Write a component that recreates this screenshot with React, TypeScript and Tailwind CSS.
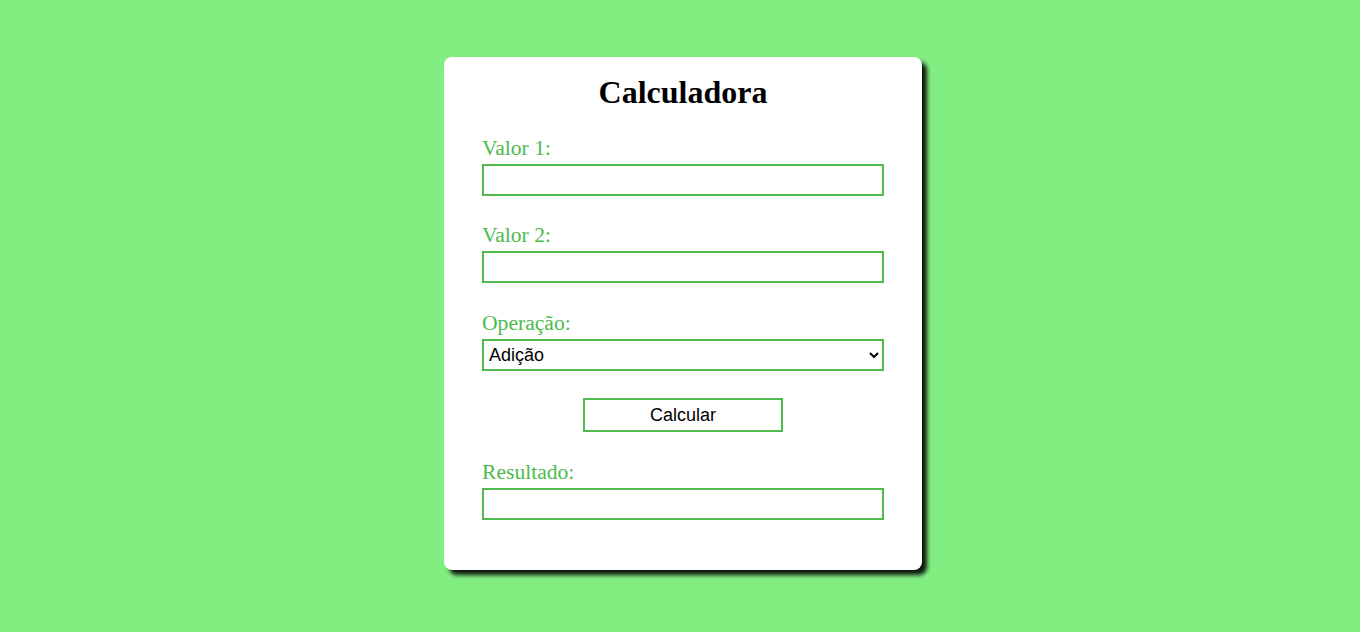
import { useState } from 'react'

const serif = { fontFamily: '"Liberation Serif", "Times New Roman", serif' }

function Field({ label, value, onChange, readOnly }: { label: string; value: string; onChange?: (v: string) => void; readOnly?: boolean }) {
  return (
    <div>
      <label className="block text-[21.6px] leading-[24px] text-[#4cbb4c] mb-[4px]" style={serif}>
        {label}
      </label>
      <input
        type="text"
        value={value}
        readOnly={readOnly}
        onChange={(e) => onChange?.(e.target.value)}
        className="block w-full h-[32px] border-2 border-[#4cbb4c] bg-white px-[3px] text-[18px] outline-none font-['Liberation_Sans',Arial,sans-serif]"
      />
    </div>
  )
}

export default function App() {
  const [a, setA] = useState('')
  const [b, setB] = useState('')
  const [op, setOp] = useState('add')
  const [result, setResult] = useState('')

  const calcular = () => {
    const x = parseFloat(a)
    const y = parseFloat(b)
    if (isNaN(x) || isNaN(y)) return setResult('')
    let r = 0
    if (op === 'add') r = x + y
    if (op === 'sub') r = x - y
    if (op === 'mul') r = x * y
    if (op === 'div') r = x / y
    setResult(String(r))
  }

  return (
    <div className="min-h-[632px] w-full bg-[#82ee82] pt-[57px] pl-[6px]">
      <div className="mx-auto w-[478px] rounded-lg bg-white px-[38px] pt-[17px] pb-[50px] shadow-[5px_5px_4px_rgba(0,0,0,0.9)]">
        <h1 className="text-center text-[32px] leading-[36px] font-bold text-black mb-[26px]" style={serif}>
          Calculadora
        </h1>

        <Field label="Valor 1:" value={a} onChange={setA} />

        <div className="mt-[27px]">
          <Field label="Valor 2:" value={b} onChange={setB} />
        </div>

        <div className="mt-[28px]">
          <label className="block text-[21.6px] leading-[24px] text-[#4cbb4c] mb-[4px]" style={serif}>
            Operação:
          </label>
          <select
            value={op}
            onChange={(e) => setOp(e.target.value)}
            className="block w-full h-[32px] border-2 border-[#4cbb4c] bg-white pl-[1px] text-[18px] text-black outline-none font-['Liberation_Sans',Arial,sans-serif]"
          >
            <option value="add">Adição</option>
            <option value="sub">Subtração</option>
            <option value="mul">Multiplicação</option>
            <option value="div">Divisão</option>
          </select>
        </div>

        <div className="mt-[27px] flex justify-center">
          <button
            onClick={calcular}
            className="h-[34px] w-[200px] border-2 border-[#4cbb4c] bg-white text-[18px] text-black font-['Liberation_Sans',Arial,sans-serif]"
          >
            Calcular
          </button>
        </div>

        <div className="mt-[28px]">
          <Field label="Resultado:" value={result} readOnly />
        </div>
      </div>
    </div>
  )
}
